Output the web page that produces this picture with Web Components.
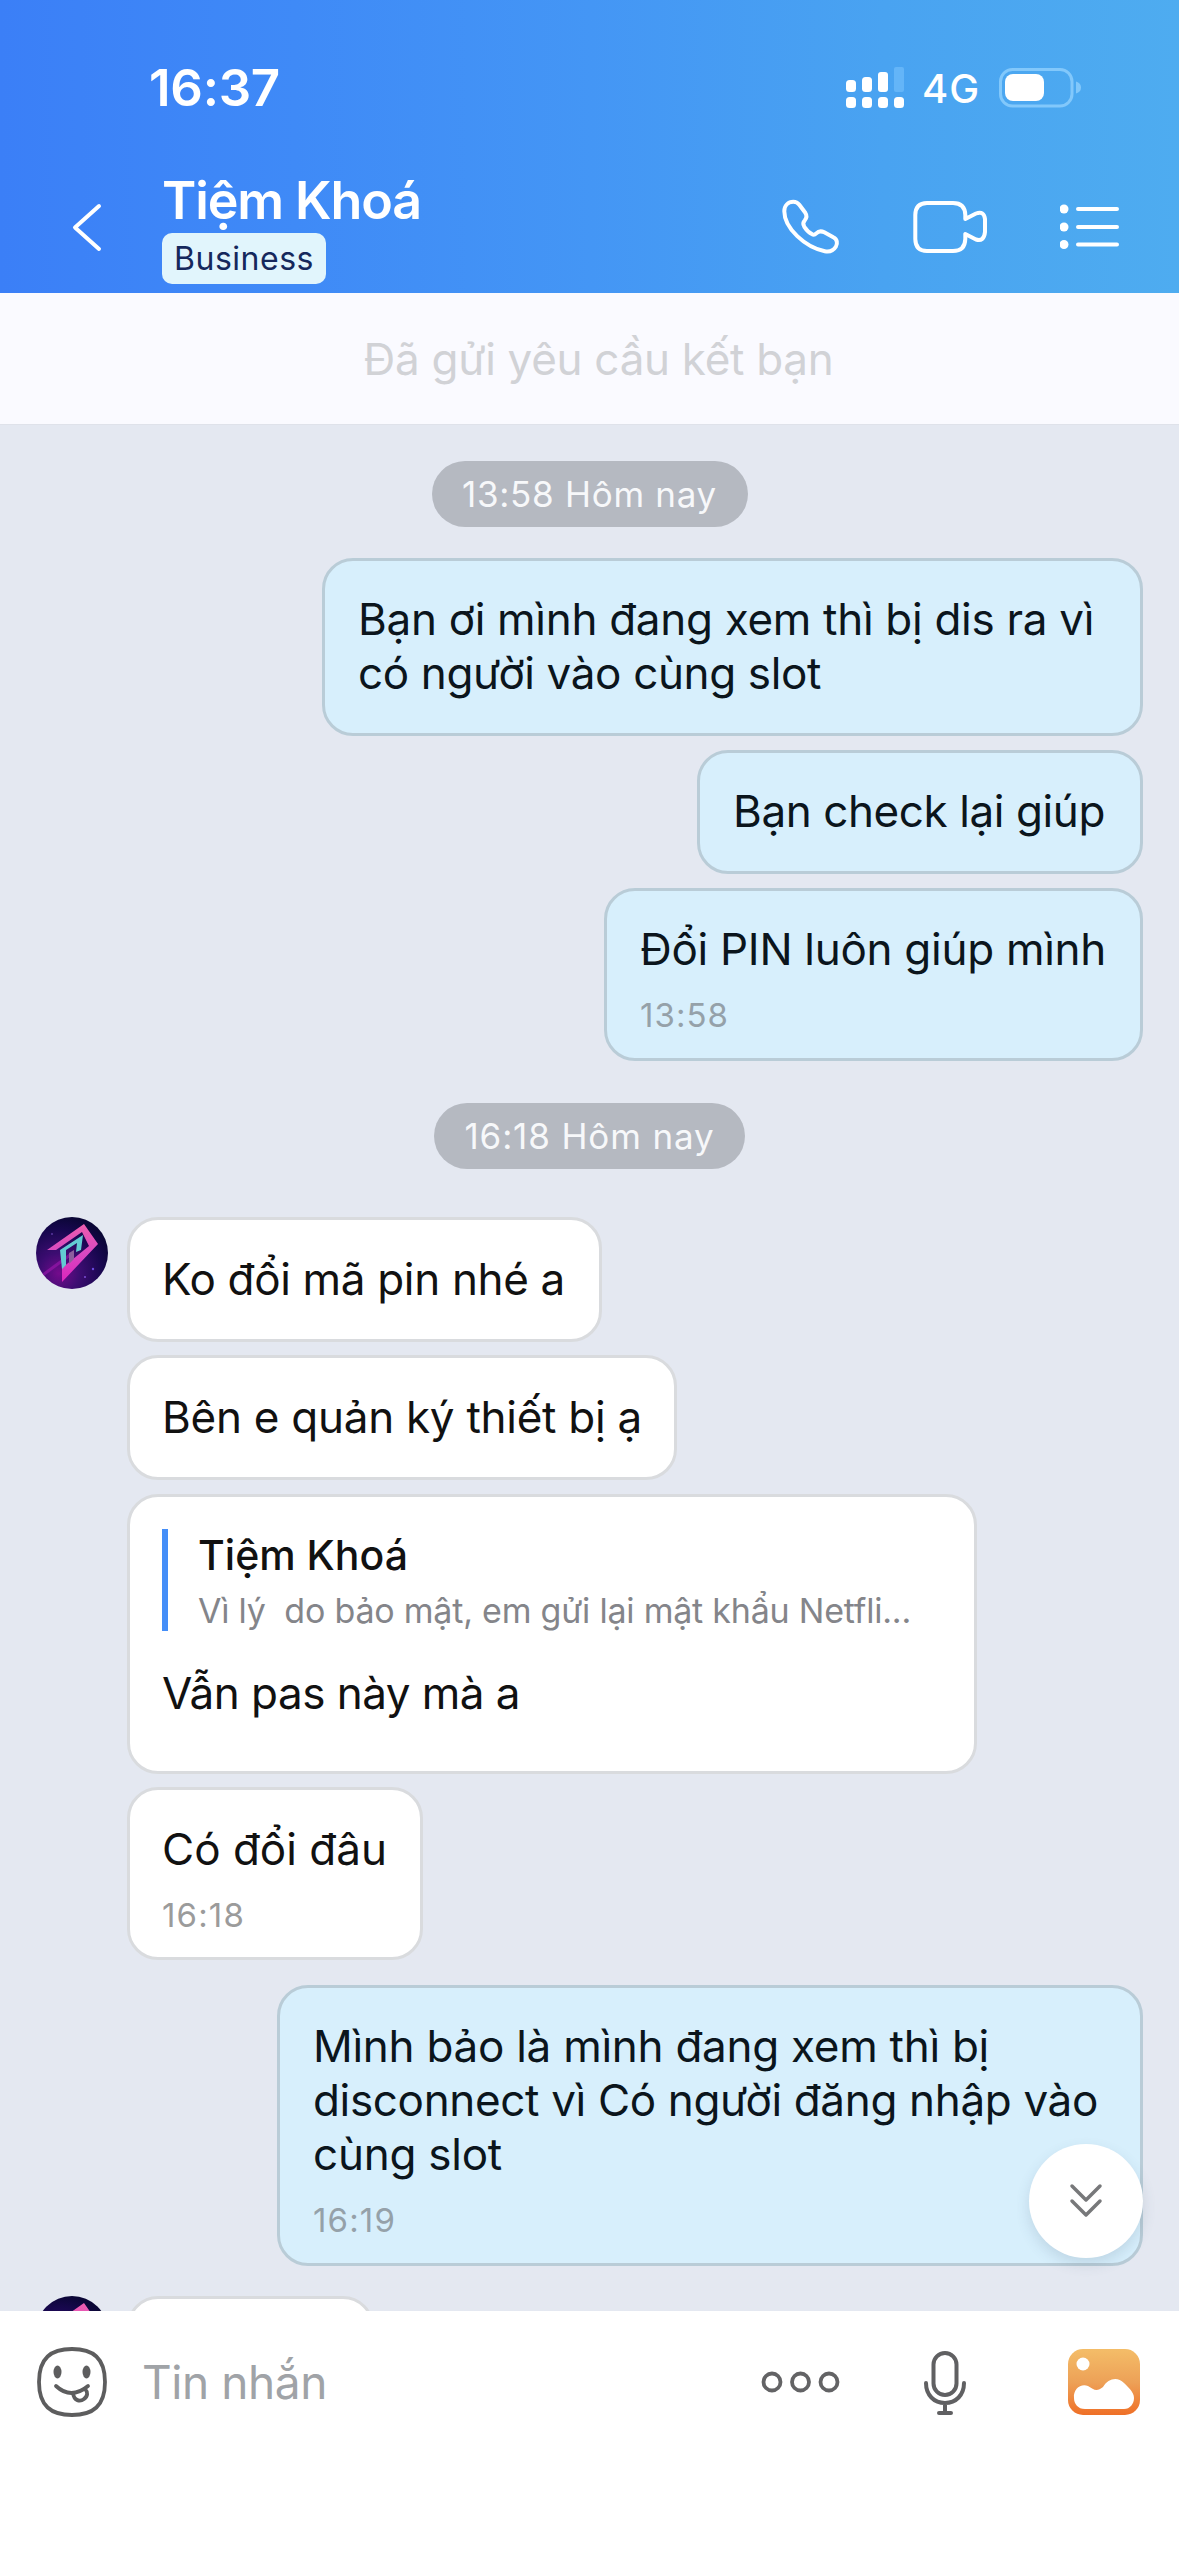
<!DOCTYPE html>
<html lang="vi">
<head>
<meta charset="utf-8">
<title>Tiệm Khoá</title>
<style>
html,body{margin:0;padding:0}
body{width:1179px;height:2556px;overflow:hidden;font-family:Inter,"Noto Sans",sans-serif;background:#fff}
</style>
</head>
<body>
<chat-screen></chat-screen>
<script>
const define = (name, html, setup) => {
  const t = document.createElement('template');
  t.innerHTML = html;
  customElements.define(name, class extends HTMLElement {
    constructor(){ super(); this.attachShadow({mode:'open'}).append(t.content.cloneNode(true)); }
    connectedCallback(){ if (setup) setup(this, this.shadowRoot); }
  });
};

/* One line of text, tracked so that its advance equals the w attribute. */
define('fit-text', `<style>:host{display:block;width:max-content;white-space:nowrap}</style><slot></slot>`, el => {
  const w = +el.getAttribute('w');
  const n = [...el.textContent].length;
  if (!w || !n) return;
  const now = el.getBoundingClientRect().width;
  el.style.letterSpacing = ((w - now) / n).toFixed(3) + 'px';
});

define('status-bar', `<style>
:host{display:flex;box-sizing:border-box;height:176px;padding:0 97px 0 149px;color:#fff;align-items:flex-start;justify-content:space-between}
.time{font-size:51px;font-weight:600;line-height:60px;margin-top:58px}
.right{display:flex;margin-top:66px;align-items:flex-start}
.net{font-size:40px;font-weight:500;line-height:46px;margin:0 19px 0 17px}
svg{display:block}
</style>
<fit-text class="time" w="131">16:37</fit-text>
<div class="right">
<svg width="59" height="43" viewBox="0 0 59 43" fill="#fff"><rect x="0" y="14" width="10" height="12" rx="3.5"/><rect x="16" y="11" width="10" height="15" rx="3.5"/><rect x="32" y="6" width="10" height="20" rx="3"/><rect x="48" y="1" width="10" height="25" rx="2" fill="#64b5f8"/><rect x="0" y="31" width="10" height="11" rx="3.5"/><rect x="16" y="31" width="10" height="11" rx="3.5"/><rect x="32" y="31" width="10" height="11" rx="3.5"/><rect x="48" y="31" width="10" height="11" rx="3.5"/></svg>
<fit-text class="net" w="58">4G</fit-text>
<svg width="83" height="43" viewBox="0 0 83 43"><rect x="1.5" y="3.5" width="71.500" height="36.500" rx="12" fill="none" stroke="#82c8fb" stroke-width="3"/><rect x="6" y="8" width="39" height="27" rx="8" fill="#fff"/><path d="M77 15.500q5 1.500 5 6t-5 6z" fill="#82c8fb"/></svg>
</div>`);

define('chat-header', `<style>
:host{display:block;height:293px;background:linear-gradient(90deg,#3b7ff7 0%,#3f8af7 25%,#4496f5 50%,#49a3f1 75%,#4eacf0 100%)}
.bar{display:flex;height:117px;align-items:flex-start;color:#fff}
.back{margin:27px 0 0 71px}
.who{margin:-7px 0 0 59px;flex:1}
.name{font-size:52px;font-weight:600;line-height:64px;margin-left:0}
.badge{display:flex;box-sizing:border-box;width:164px;height:51px;border-radius:10px;background:#e1f5fc;color:#15285c;justify-content:center;align-items:center;font-size:32px;padding-top:1px;line-height:50px}
svg{display:block}
.phone{margin-top:21px}.video{margin:22px 0 0 67px}.list{margin:25px 57px 0 71px}
</style>
<status-bar></status-bar>
<div class="bar">
<svg class="back" width="32" height="49" viewBox="0 0 32 49"><path d="M28.500 3.500L4.500 25l24 21.500" transform="translate(-.5 -.5)" fill="none" stroke="#fff" stroke-width="4" stroke-linecap="round" stroke-linejoin="round"/></svg>
<div class="who"><fit-text class="name" w="259">Tiệm Khoá</fit-text><div class="badge"><fit-text w="140">Business</fit-text></div></div>
<svg class="phone" width="64" height="64" viewBox="0 0 64 64"><path d="M5 15C5 9 9 5.500 14 5.500c3 0 4.500 1 6 3l6 8c2 3 1.500 5-.5 7.500-2 2-2 4-.5 6.500 2 3 5 6 8 7.500 1.500 1 2.500.5 4-1 2.500-2.500 5-2.500 8-1l9 5c4 2 4.500 6 2.500 9.500-2.500 4-6 5.500-11 4.500C26 51 5 32 5 15z" transform="translate(-.7 -.7)" fill="none" stroke="#fff" stroke-width="4" stroke-linejoin="round"/></svg>
<svg class="video" width="78" height="58" viewBox="0 0 78 58"><path d="M16 5H42Q54 5 54.300 17V21L65 15.500Q73 12.500 74 21V34Q73 44 65 41.500L54.300 36V41Q54 53 42 53H16Q4.500 53 4.300 41V17Q4.500 5 16 5z" fill="none" stroke="#fff" stroke-width="4" stroke-linejoin="round"/></svg>
<svg class="list" width="62" height="48" viewBox="0 0 62 48"><g fill="#fff"><circle cx="4" cy="8" r="4.500"/><circle cx="4" cy="26" r="4.500"/><circle cx="4" cy="43.500" r="4.500"/></g><path d="M18 8h39M18 26h39M18 43.500h39" stroke="#fff" stroke-width="4" stroke-linecap="round"/></svg>
</div>`);

define('friend-banner', `<style>
:host{display:flex;box-sizing:border-box;height:132px;background:#fafaff;border-bottom:1px solid #dfe2ea;justify-content:center;padding:39px 0 0 18px;font-size:44px;line-height:54px;color:#d1d2d6}
</style><slot></slot>`);

define('time-pill', `<style>
:host{display:flex;align-self:center;box-sizing:border-box;height:67px;width:var(--w);border-radius:34px;background:#b5b9c1;color:#f7f8fa;font-size:35px;line-height:66px;justify-content:center}
</style><slot></slot>`);

define('shop-avatar', `<style>:host{display:block;width:72px;height:72px;border-radius:50%;overflow:hidden}svg{display:block}</style>
<svg width="72" height="72" viewBox="0 0 72 72"><defs><radialGradient id="g" cx=".32" cy=".78" r=".8"><stop offset="0" stop-color="#750c8d"/><stop offset=".35" stop-color="#3d0d72"/><stop offset=".75" stop-color="#18074f"/><stop offset="1" stop-color="#0a0635"/></radialGradient><linearGradient id="p" x1="0" y1="0" x2="0" y2="1"><stop offset="0" stop-color="#ed5dae"/><stop offset=".5" stop-color="#d849c1"/><stop offset="1" stop-color="#dc24bd"/></linearGradient></defs>
<rect width="72" height="72" fill="url(#g)"/>
<path d="M4 60l30-22" stroke="#a71bb5" stroke-width="3" opacity=".55"/><circle cx="57" cy="52" r="1.200" fill="#6b49e0"/><circle cx="16" cy="17" r="1" fill="#5a369f"/><circle cx="49" cy="60" r="1" fill="#7e4dd4"/>
<path fill="url(#p)" d="M11 33L48 7l14 20L26 65V51L53 29 46 15 20 33z"/>
<path d="M24 33l23-15-2 15-5 2 1-9-11 7v15l-4 4z" fill="#63cbd2"/><path d="M33 36l5-3v9l-5 5z" fill="#8d5e9e"/></svg>`);

define('chat-bubble', `<style>
:host{display:flex;flex-direction:column;box-sizing:border-box;width:var(--w);height:var(--h);border:3px solid #d9dbde;border-radius:31px;background:#fff;padding:32px 0 0 32px;font-size:44px;line-height:54px;color:#111;flex:none}
:host([mine]){background:#d7effc;border-color:#b9ccd7;color:#0b151c;align-self:flex-end;margin-right:36px;padding:31px 0 0 33px}
::slotted([slot=time]){font-size:33px;line-height:40px;color:#9b9b9b;margin-top:19px}
:host([mine]) ::slotted([slot=time]){color:#95a1a9}
</style><slot></slot><slot name="time"></slot>`);

define('message-row', `<style>
:host{display:flex;align-items:flex-start;padding-left:36px}
.av{width:72px;margin-right:19px;flex:none}
</style><div class="av"><slot name="avatar"></slot></div><slot></slot>`);

define('quoted-reply', `<style>
:host{display:flex;box-sizing:border-box;height:102px;border-left:6px solid #448ef8;padding-left:29px;flex-direction:column;margin:0 0 35px 0}
.name{font-size:41px;font-weight:500;line-height:50px;color:#111;margin:1px 0 0 1px}
.text{font-size:34px;line-height:40px;color:#84858a;margin:11px 0 0 1px}
</style><fit-text class="name" w="210">Tiệm Khoá</fit-text><fit-text class="text" w="713">Vì lý&nbsp; do bảo mật, em gửi lại mật khẩu Netfli...</fit-text>`);

define('scroll-button', `<style>
:host{position:absolute;right:36px;top:1719px;width:114px;height:114px;border-radius:50%;background:#fff;box-shadow:0 6px 14px rgba(60,90,110,.16);display:flex;align-items:center;justify-content:center}
</style><svg width="36" height="40" viewBox="0 0 36 40"><path d="M4 5L18 19 32 5M4 20L18 34 32 20" fill="none" stroke="#77787a" stroke-width="3.500" stroke-linecap="round" stroke-linejoin="round"/></svg>`);

define('chat-composer', `<style>
:host{display:flex;box-sizing:border-box;height:245px;background:#fff;padding:34px 39px 0 35px;align-items:flex-start}
.hint{font-size:46px;line-height:56px;color:#a0a3a7;margin:9px 0 0 33px;flex:1}
svg{display:block}
.mic{margin-left:81px}.pic{margin-left:100px}
</style>
<svg width="74" height="74" viewBox="0 0 74 74"><g fill="none" stroke="#5d5d5e" stroke-width="3.800" stroke-linecap="round" stroke-linejoin="round"><path d="M37 4C58 4 70 13 70 37S58 70 37 70 4 61 4 37 16 4 37 4z"/><path d="M21 41q15 14 32 0"/><path d="M38 48c1 8 7 9 11 6 4-3 4-7 1-10" /></g><ellipse cx="22.500" cy="27" rx="4" ry="6.500" fill="#5d5d5e"/><ellipse cx="51.500" cy="27" rx="4" ry="6.500" fill="#5d5d5e"/></svg>
<div class="hint"><fit-text w="185">Tin nhắn</fit-text></div>
<svg width="80" height="74" viewBox="0 0 80 74" fill="none" stroke="#636365" stroke-width="3.800"><circle cx="11" cy="37" r="8.500"/><circle cx="39.500" cy="37" r="8.500"/><circle cx="68" cy="37" r="8.500"/></svg>
<svg class="mic" width="46" height="74" viewBox="0 0 46 74" fill="none" stroke="#606062" stroke-width="4" stroke-linecap="round"><rect x="11.500" y="8" width="23" height="42" rx="11.500"/><path d="M4 38c0 12 8 20 19 20s19-8 19-20M23 58v9M17 68h12"/></svg>
<svg class="pic" width="72" height="74" viewBox="0 0 72 74"><defs><linearGradient id="o" x1="0" y1="0" x2="0" y2="1"><stop offset="0" stop-color="#f4bd68"/><stop offset=".5" stop-color="#eda157"/><stop offset="1" stop-color="#ef7027"/></linearGradient></defs><rect y="4" width="72" height="66" rx="15" fill="url(#o)"/><circle cx="15" cy="19" r="6.500" fill="#fff"/><path d="M6 53C5 44 13 38 20 41c6 4 9 6 15 1C40 34 49 31 56 38c4 4 10 9 10 15 0 6-4 11-10 11H17C10 64 6 59 6 53z" fill="#fff"/></svg>`);

define('chat-screen', `<style>
:host{display:flex;flex-direction:column;width:1179px;height:2556px;overflow:hidden}
.log{position:relative;display:flex;flex-direction:column;height:1886px;box-sizing:border-box;padding-top:36px;background:#e4e8f1;overflow:hidden}
</style>
<chat-header></chat-header>
<friend-banner><fit-text w="470">Đã gửi yêu cầu kết bạn</fit-text></friend-banner>
<div class="log">
<time-pill style="--w:316px"><fit-text w="255">13:58 Hôm nay</fit-text></time-pill>
<chat-bubble mine style="--w:821px;--h:178px;margin-top:31px"><fit-text w="736">Bạn ơi mình đang xem thì bị dis ra vì</fit-text><fit-text w="463">có người vào cùng slot</fit-text></chat-bubble>
<chat-bubble mine style="--w:446px;--h:124px;margin-top:14px"><fit-text w="372">Bạn check lại giúp</fit-text></chat-bubble>
<chat-bubble mine style="--w:539px;--h:173px;margin-top:14px"><fit-text w="466">Đổi PIN luôn giúp mình</fit-text><fit-text slot="time" w="89">13:58</fit-text></chat-bubble>
<time-pill style="--w:311px;margin-top:42px"><fit-text w="250">16:18 Hôm nay</fit-text></time-pill>
<message-row style="margin-top:48px"><shop-avatar slot="avatar"></shop-avatar><chat-bubble style="--w:475px;--h:125px"><fit-text w="403">Ko đổi mã pin nhé a</fit-text></chat-bubble></message-row>
<message-row style="margin-top:13px"><chat-bubble style="--w:550px;--h:125px"><fit-text w="480">Bên e quản ký thiết bị ạ</fit-text></chat-bubble></message-row>
<message-row style="margin-top:14px"><chat-bubble style="--w:850px;--h:280px"><quoted-reply></quoted-reply><fit-text w="358">Vẫn pas này mà a</fit-text></chat-bubble></message-row>
<message-row style="margin-top:13px"><chat-bubble style="--w:296px;--h:173px"><fit-text w="225">Có đổi đâu</fit-text><fit-text slot="time" w="83">16:18</fit-text></chat-bubble></message-row>
<chat-bubble mine style="--w:866px;--h:281px;margin-top:25px"><fit-text w="676">Mình bảo là mình đang xem thì bị</fit-text><fit-text w="785">disconnect vì Có người đăng nhập vào</fit-text><fit-text w="189">cùng slot</fit-text><fit-text slot="time" w="83">16:19</fit-text></chat-bubble>
<message-row style="margin-top:30px"><shop-avatar slot="avatar"></shop-avatar><chat-bubble style="--w:247px;--h:124px"></chat-bubble></message-row>
<scroll-button></scroll-button>
</div>
<chat-composer></chat-composer>`);
</script>
</body>
</html>
